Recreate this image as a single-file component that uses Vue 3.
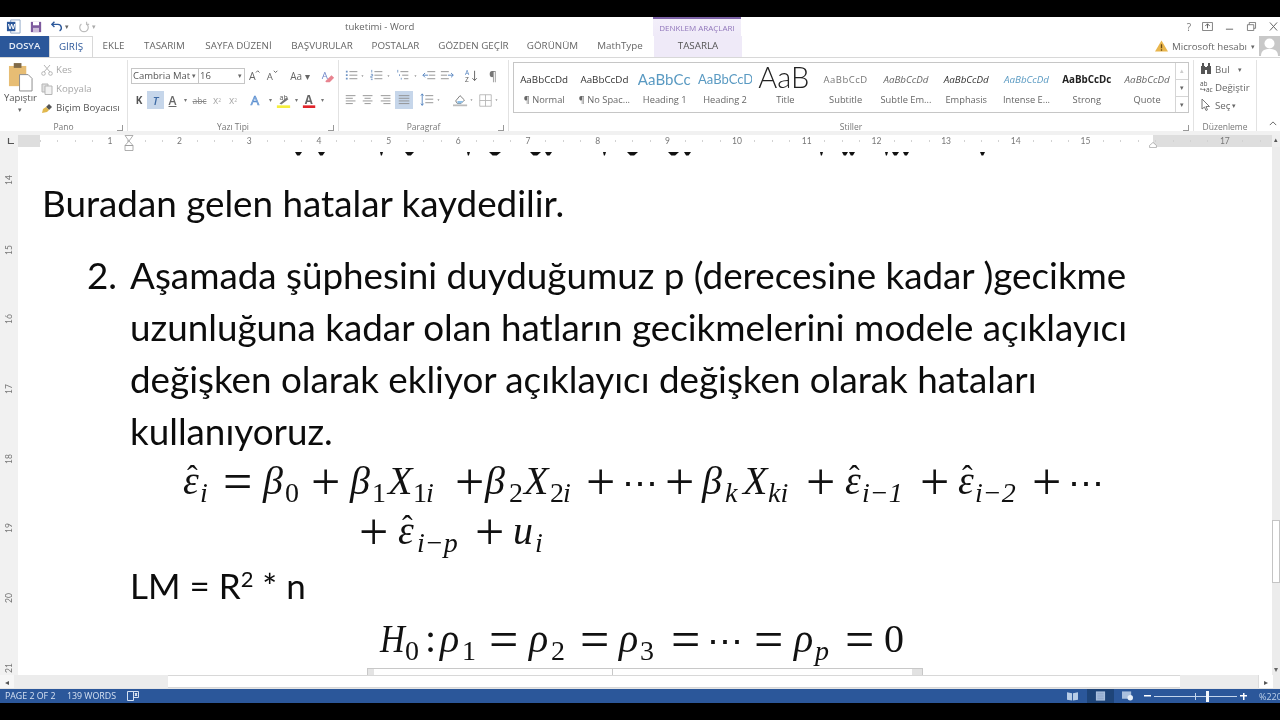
<script setup>
const tabs = [
  { t: 'DOSYA', w: 49, c: 'file' }, { t: 'GİRİŞ', w: 44, c: 'active' }, { t: 'EKLE', w: 41 }, { t: 'TASARIM', w: 61 },
  { t: 'SAYFA DÜZENİ', w: 87 }, { t: 'BAŞVURULAR', w: 80 }, { t: 'POSTALAR', w: 67 }, { t: 'GÖZDEN GEÇİR', w: 89 },
  { t: 'GÖRÜNÜM', w: 69 }, { t: 'MathType', w: 66 }, { t: 'TASARLA', w: 88, c: 'ctx' }
]
const lines3 = '<path d="M5 3h9M5 7h9M5 11h9" stroke="#8a8a8a"/><path d="M1 2h2v2H1zM1 6h2v2H1zM1 10h2v2H1z" fill="#6f94c4"/>'
const arrow = '<path d="M0 0h5L2.5 3z" fill="#666" transform="translate(1 6)"/>'
const al = y => `<path d="${y}" stroke="#8c8c8c" fill="none"/>`
const fontRow1 = [
  { w: 2 }, { w: 17, s: '<text x="1" y="13" font-size="12" fill="#666" font-family="Open Sans">A</text><path d="M9 4l2-2 2 2" stroke="#555" fill="none"/>' },
  { w: 17, s: '<text x="2" y="13" font-size="11" fill="#666" font-family="Open Sans">A</text><path d="M10 2l2 2 2-2" stroke="#555" fill="none"/>' },
  { w: 6 }, { w: 26, t: 'Aa ▾', c: 'aa' }, { w: 6 },
  { w: 16, s: '<text x="2" y="11" font-size="11" fill="#6f86c8" font-family="Open Sans">A</text><path d="M6 14l7-7 3 3-5 5H7z" fill="#e8838f"/>' }
]
const fontRow2 = [
  { w: 3 }, { w: 16, t: 'K', c: 'bk' }, { w: 17, t: 'T', c: 'it on' }, { w: 17, t: 'A', c: 'un' }, { w: 9, t: '▾', c: 'dd' },
  { w: 19, t: 'abc', c: 'st' }, { w: 16, t: 'x', sub: '2', c: 'sc' }, { w: 16, t: 'x', sup: '2', c: 'sc' }, { w: 6 },
  { w: 19, s: '<text x="2" y="14" font-size="15" fill="#fff" stroke="#5b8fd0" stroke-width=".8" font-family="Open Sans">A</text>' }, { w: 8, t: '▾', c: 'dd' },
  { w: 18, s: '<text x="4" y="8" font-size="8" fill="#555" font-family="Open Sans">ab</text><path d="M4 12l8-7 2 2-8 6z" fill="#777"/><rect x="1" y="14" width="15" height="3" fill="#f5ee3d"/>' }, { w: 8, t: '▾', c: 'dd' },
  { w: 18, s: '<text x="3" y="12" font-size="13" font-weight="700" fill="#666" font-family="Open Sans">A</text><rect x="1" y="14" width="14" height="3" fill="#e0242a"/>' }, { w: 8, t: '▾', c: 'dd' }
]
const paraRow1 = [
  { w: 20, s: lines3 }, { w: 5, s: arrow }, { w: 20, s: '<path d="M5 3h9M5 7h9M5 11h9" stroke="#8a8a8a"/><path d="M2 1v3M1 6h2v2H1v2h2M1 12h2" stroke="#6f94c4" fill="none"/>' }, { w: 6, s: arrow },
  { w: 20, s: '<path d="M5 3h9M7 7h7M9 11h5" stroke="#8a8a8a"/><path d="M2 1v3M4 6v2M6 10v2" stroke="#6f94c4"/>' }, { w: 8, s: arrow },
  { w: 17, s: '<path d="M6 3h9M8 7h7M6 11h9" stroke="#8a8a8a"/><path d="M7 7H1M3.5 4.5L1 7l2.500 2.500" stroke="#4f7fbd" fill="none"/>' },
  { w: 18, s: '<path d="M1 3h9M1 7h7M1 11h9" stroke="#8a8a8a"/><path d="M9 7h6M12.500 4.500L15 7l-2.500 2.500" stroke="#4f7fbd" fill="none"/>' },
  { w: 6 }, { w: 18, s: '<text x="1" y="7" font-size="7.500" fill="#4f7fbd" font-family="Open Sans">A</text><text x="1" y="15" font-size="7.500" fill="#555" font-family="Open Sans">Z</text><path d="M12 2v11M9.500 10.500L12 13l2.500-2.500" stroke="#555" fill="none"/>' },
  { w: 5 }, { w: 16, t: '¶', c: 'pil' }
]
const paraRow2 = [
  { w: 18, s: al('M2 3h11M2 6h8M2 9h11M2 12h8') }, { w: 17, s: al('M2 3h11M4 6h7M2 9h11M4 12h7') }, { w: 18, s: al('M2 3h11M5 6h8M2 9h11M5 12h8') },
  { w: 18, c: 'on', s: al('M2 3h12M2 6h12M2 9h12M2 12h12') }, { w: 5 },
  { w: 18, s: '<path d="M6 3h9M6 7h9M6 11h9" stroke="#8a8a8a"/><path d="M2.500 1v13M1 3l1.500-2L4 3M1 12l1.500 2L4 12" stroke="#4f7fbd" fill="none"/>' }, { w: 8, s: arrow }, { w: 8 },
  { w: 17, s: '<path d="M3 9l5-6 5 5-4 4H5z" fill="#fff" stroke="#6d6d6d"/><path d="M5 9h7l-3 3H5z" fill="#8fc0e8"/><path d="M0 14h16" stroke="#bbb" stroke-width="2"/>' }, { w: 8, s: arrow },
  { w: 17, s: '<path d="M2 2h13v13H2zM8.500 2v13M2 8.500h13" stroke="#b5b5b5" fill="none"/>' }, { w: 8, s: arrow }
]
const styles = [
  { p: 'AaBbCcDd', l: '¶ Normal', c: 'sN' }, { p: 'AaBbCcDd', l: '¶ No Spac...', c: 'sN' }, { p: 'AaBbCc', l: 'Heading 1', c: 'sH1' },
  { p: 'AaBbCcD', l: 'Heading 2', c: 'sH2' }, { p: 'AaB', l: 'Title', c: 'sT' }, { p: 'AaBbCcD', l: 'Subtitle', c: 'sS' },
  { p: 'AaBbCcDd', l: 'Subtle Em...', c: 'sE' }, { p: 'AaBbCcDd', l: 'Emphasis', c: 'sEm' }, { p: 'AaBbCcDd', l: 'Intense E...', c: 'sI' },
  { p: 'AaBbCcDc', l: 'Strong', c: 'sSt' }, { p: 'AaBbCcDd', l: 'Quote', c: 'sE' }
]
const hnums = [1, 2, 3, 4, 5, 6, 7, 8, 9, 10, 11, 12, 13, 14, 15, '', 17]
const vnums = [14, 15, 16, 17, 18, 19, 20, 21]
const marks = [[295, 7], [318, 7], [380, 3], [405, 9], [467, 3], [489, 12], [530, 11], [545, 7], [603, 3], [627, 11], [668, 11], [684, 7], [820, 3], [842, 6], [849, 6], [885, 3], [892, 7], [903, 6], [980, 5]]
const markPts = m => `${m[0] - 18},0 ${m[0] - 18 + m[1]},0 ${m[0] - 18 + m[1] * 0.65},3.5 ${m[0] - 18 + m[1] * 0.3},3.5`

const toks = list => list.map((a, i) => ({ t: a[1], c: a[2] || 'mi', w: (list[i + 1] ? list[i + 1][0] : a[0] + 40) - a[0] }))
const eq1 = toks([
  [183, 'ε', 'mi hat'], [200, 'i', 'sb'], [223, '=', 'op'], [263, 'β'], [285, '0', 'sn'], [311, '+', 'op'], [350, 'β'], [372, '1', 'sn'], [388, 'X'], [413, '1', 'sn'], [426, 'i', 'sb'],
  [455, '+', 'op'], [485, 'β'], [509, '2', 'sn'], [524, 'X'], [550, '2', 'sn'], [563, 'i', 'sb'], [586, '+', 'op'], [622, '⋯', 'dots'], [665, '+', 'op'], [702, 'β'], [725, 'k', 'sb'],
  [743, 'X'], [768, 'ki', 'sb'], [806, '+', 'op'], [845, 'ε', 'mi hat'], [862, 'i−1', 'sb'], [920, '+', 'op'], [958, 'ε', 'mi hat'], [975, 'i−2', 'sb'], [1032, '+', 'op'], [1068, '⋯', 'dots']
])
const eq2 = toks([[359, '+', 'op'], [398, 'ε', 'mi hat'], [417, 'i−p', 'sb'], [475, '+', 'op'], [513, 'u'], [535, 'i', 'sb']])
const eq3 = toks([
  [380, 'H', 'mi nar'], [405, '0', 'sn'], [425, ':', 'rm'], [440, 'ρ'], [462, '1', 'sn'], [489, '=', 'op'], [529, 'ρ'], [551, '2', 'sn'], [580, '=', 'op'], [619, 'ρ'], [640, '3', 'sn'],
  [671, '=', 'op'], [707, '⋯', 'dots'], [754, '=', 'op'], [794, 'ρ'], [815, 'p', 'sb'], [845, '=', 'op'], [884, '0', 'rm']
])
const equations = [{ k: 'e1', c: 'eq1', x: 183, toks: eq1 }, { k: 'e2', c: 'eq2', x: 359, toks: eq2 }]
</script>

<template>
  <div class="screen">
    <div class="blackbar top"></div>
    <div class="window">
      <div class="title">
        <div class="qat">
          <svg class="ic16" viewBox="0 0 16 16"><path d="M5 1h10v14H5z" fill="#fff" stroke="#8fa6c8"/><path d="M1 3h9v10H1z" fill="#2b579a"/><text x="2" y="11" font-size="8" font-weight="700" fill="#fff" font-family="Open Sans">W</text></svg>
          <svg class="ic14 gapL" viewBox="0 0 14 14"><path d="M1 1h12v12H1z" fill="#7d5a9e"/><path d="M3.500 1h7v4h-7z" fill="#fff"/><path d="M3.500 8h7v5h-7z" fill="#cbbcd9"/></svg>
          <svg class="ic14 gapM" viewBox="0 0 14 14"><path d="M4 1L1 4l3 3" fill="none" stroke="#2b579a" stroke-width="1.600"/><path d="M1 4h7a4 4 0 0 1 2 7.500" fill="none" stroke="#2b579a" stroke-width="1.600"/></svg>
          <span class="tiny">▾</span>
          <svg class="ic14 gapM" viewBox="0 0 14 14"><path d="M4 3.500a5 5 0 1 0 6 0M10 1v3h3" fill="none" stroke="#bdbdbd" stroke-width="1.400"/></svg>
          <span class="tiny lt">▾</span>
        </div>
        <div class="docname">tuketimi - Word</div>
        <div class="ctxhead">DENKLEM ARAÇLARI</div>
        <div class="winbtns">
          <span class="q">?</span>
          <svg class="wb" viewBox="0 0 12 10"><path d="M.5.5h11v9H.5z" fill="none" stroke="#777"/><path d="M6 2v5M3.500 4.500L6 2l2.500 2.500" fill="none" stroke="#555"/></svg>
          <svg class="wb" viewBox="0 0 12 10"><path d="M2 8h8" stroke="#777" stroke-width="1.200"/></svg>
          <svg class="wb" viewBox="0 0 12 10"><path d="M1.500 3h7v6.500h-7zM3.500 3V.5h7v6.500H8.500" fill="none" stroke="#777"/></svg>
          <svg class="wb" viewBox="0 0 12 10"><path d="M2 .5l8 9M10 .5l-8 9" stroke="#666" stroke-width="1.100"/></svg>
        </div>
      </div>

      <div class="tabs">
        <div v-for="tab in tabs" :key="tab.t" class="tab" :class="tab.c" :style="{ width: tab.w + 'px' }">{{ tab.t }}</div>
        <div class="account">
          <svg class="warn" viewBox="0 0 14 12"><path d="M7 0l7 12H0z" fill="#e9b64d"/><path d="M6.300 4h1.400v4.500H6.300zM6.300 9.500h1.400V11H6.300z" fill="#6b4b12"/></svg>
          <span class="acname">Microsoft hesabı</span><span class="tiny acarrow">▾</span>
          <svg class="avatar" viewBox="0 0 21 20"><rect width="21" height="20" fill="#c8c8c8"/><circle cx="10.500" cy="7.500" r="5" fill="#fff"/><path d="M2 20c0-6 4-7 8.500-7S19 14 19 20z" fill="#fff"/></svg>
        </div>
      </div>

      <div class="ribbon">
        <div class="group g-pano">
          <div class="gbody pano">
            <div class="paste">
              <svg class="clip" viewBox="0 0 26 30"><rect x="1" y="3" width="18" height="21" fill="#e7bd74"/><rect x="6" y="0" width="8" height="5" fill="#7f6a48"/><path d="M12 12h9l4 4v13H12z" fill="#fff" stroke="#8a8a8a"/></svg>
              <span class="pastelbl">Yapıştır</span>
              <span class="tiny">▾</span>
            </div>
            <div class="clipcol">
              <div class="cliprow dis"><svg class="ic12" viewBox="0 0 12 12"><path d="M3 1l6 7M9 1L3 8" stroke="#b5b5b5" fill="none"/><circle cx="2.500" cy="9.500" r="1.800" fill="none" stroke="#b5b5b5"/><circle cx="9.500" cy="9.500" r="1.800" fill="none" stroke="#b5b5b5"/></svg>Kes</div>
              <div class="cliprow dis"><svg class="ic12" viewBox="0 0 12 12"><path d="M1 1h6v8H1z" fill="#e0e0e0" stroke="#b5b5b5"/><path d="M4 3h7v8.500H4z" fill="#f2f2f2" stroke="#b5b5b5"/></svg>Kopyala</div>
              <div class="cliprow"><svg class="ic12" viewBox="0 0 12 12"><path d="M5 5l3-3 3 3-3 3z" fill="#555"/><path d="M5 5l3 3-2 2-5 1 1-4z" fill="#e1b84d"/></svg>Biçim Boyacısı</div>
            </div>
          </div>
          <div class="gfoot">Pano<span class="launcher"></span></div>
        </div>

        <div class="group g-font">
          <div class="gbody stack">
            <div class="row r1">
              <div class="combo name">Cambria Mat<span class="tiny">▾</span></div>
              <div class="combo size">16<span class="tiny">▾</span></div>
              <div v-for="(c, i) in fontRow1" :key="i" class="cell" :class="c.c" :style="{ width: c.w + 'px' }">
                <svg v-if="c.s" class="ic" viewBox="0 0 17 17" v-html="c.s"></svg><template v-else-if="c.t">{{ c.t }}</template>
              </div>
            </div>
            <div class="row r2">
              <div v-for="(c, i) in fontRow2" :key="i" class="cell" :class="c.c" :style="{ width: c.w + 'px' }">
                <svg v-if="c.s" class="ic" viewBox="0 0 17 17" v-html="c.s"></svg><template v-else-if="c.t">{{ c.t }}<sub v-if="c.sub">{{ c.sub }}</sub><sup v-if="c.sup">{{ c.sup }}</sup></template>
              </div>
            </div>
          </div>
          <div class="gfoot">Yazı Tipi<span class="launcher"></span></div>
        </div>

        <div class="group g-para">
          <div class="gbody stack">
            <div class="row r1 pr">
              <div v-for="(c, i) in paraRow1" :key="i" class="cell" :class="c.c" :style="{ width: c.w + 'px' }">
                <svg v-if="c.s" class="ic" :class="{ ar: c.w < 9 }" viewBox="0 0 17 17" v-html="c.s"></svg><template v-else-if="c.t">{{ c.t }}</template>
              </div>
            </div>
            <div class="row r2 pr">
              <div v-for="(c, i) in paraRow2" :key="i" class="cell" :class="c.c" :style="{ width: c.w + 'px' }">
                <svg v-if="c.s" class="ic" :class="{ ar: c.w < 9 }" viewBox="0 0 17 17" v-html="c.s"></svg>
              </div>
            </div>
          </div>
          <div class="gfoot">Paragraf<span class="launcher"></span></div>
        </div>

        <div class="group g-styles">
          <div class="gbody">
            <div class="gallery">
              <div v-for="s in styles" :key="s.l" class="style">
                <div class="prev" :class="s.c">{{ s.p }}</div>
                <div class="lab">{{ s.l }}</div>
              </div>
              <div class="gscroll">
                <span class="dim">▴</span><span>▾</span><span class="more">▾</span>
              </div>
            </div>
          </div>
          <div class="gfoot">Stiller<span class="launcher"></span></div>
        </div>

        <div class="group g-edit">
          <div class="gbody editcol">
            <div class="edrow"><svg class="ic12" viewBox="0 0 12 12"><path d="M1 3h4v8H1zM7 3h4v8H7zM2 0h2v3H2zM8 0h2v3H8zM5 4h2v3H5z" fill="#555"/></svg>Bul<span class="tiny ed">▾</span></div>
            <div class="edrow"><span class="abac">ab<br>↪ac</span>Değiştir</div>
            <div class="edrow"><svg class="ic12" viewBox="0 0 12 12"><path d="M2 0v10l2.500-2 1.500 3.500 1.500-.7L6 7.500h3.500z" fill="#fff" stroke="#777"/></svg>Seç<span class="tiny ed2">▾</span></div>
          </div>
          <div class="gfoot">Düzenleme</div>
        </div>
        <div class="collapse"><svg viewBox="0 0 10 6"><path d="M1 5l4-4 4 4" fill="none" stroke="#666" stroke-width="1.200"/></svg></div>
      </div>

      <div class="rulerrow">
        <div class="corner"><svg viewBox="0 0 7 7"><path d="M1.500 0v5.500H7" fill="none" stroke="#555" stroke-width="1.200"/></svg></div>
        <div class="hruler">
          <span v-for="(n, i) in hnums" :key="i" class="hn">{{ n }}</span>
          <svg class="marker left" viewBox="0 0 10 16"><path d="M1 .5h8L5 6zM5 6L1 10.500h8zM1 10.500h8v5H1z" fill="#fff" stroke="#9a9a9a" stroke-width=".8"/></svg>
          <svg class="marker right" viewBox="0 0 10 7"><path d="M5 .5L9 4v2.500H1V4z" fill="#fff" stroke="#9a9a9a" stroke-width=".8"/></svg>
        </div>
        <div class="scrollup"><span>▴</span></div>
      </div>

      <div class="main">
        <div class="vruler">
          <div class="vtrack"><span v-for="n in vnums" :key="n" class="vn"><i>{{ n }}</i></span></div>
        </div>
        <div class="doc">
          <svg class="clipped" viewBox="0 0 1254 6" width="1254" height="6">
            <polygon v-for="m in marks" :key="m[0]" :points="markPts(m)" fill="#111" />
          </svg>
          <p class="para first">Buradan gelen hatalar kaydedilir.</p>
          <div class="item">
            <span class="num">2.</span>
            <div class="itemtext">
              <div>Aşamada şüphesini duyduğumuz p (derecesine kadar )gecikme</div>
              <div>uzunluğuna kadar olan hatların gecikmelerini modele açıklayıcı</div>
              <div>değişken olarak ekliyor açıklayıcı değişken olarak hataları</div>
              <div>kullanıyoruz.</div>
            </div>
          </div>
          <div v-for="e in equations" :key="e.k" class="eq" :class="e.c" :style="{ paddingLeft: (e.x - 18) + 'px' }">
            <span v-for="(tk, i) in e.toks" :key="i" class="tk" :class="tk.c" :style="{ width: tk.w + 'px' }">{{ tk.t }}</span>
          </div>
          <div class="lm">LM = R<sup>2</sup> * n</div>
          <div class="eq eq3">
            <span v-for="(tk, i) in eq3" :key="i" class="tk" :class="tk.c" :style="{ width: tk.w + 'px' }">{{ tk.t }}</span>
          </div>
          <div class="frame"><span class="hand"></span><span class="hand2"></span></div>
        </div>
        <div class="vscroll">
          <div class="vthumb"></div>
          <span class="vdown">▾</span>
        </div>
      </div>

      <div class="hscroll">
        <span class="harrow">◂</span>
        <div class="hthumb"></div>
        <span class="harrow r">▸</span>
      </div>

      <div class="status">
        <span class="st1">PAGE 2 OF 2</span>
        <span class="st2">139 WORDS</span>
        <svg class="sticon" viewBox="0 0 12 10"><path d="M.5.500h6v9h-6zM6.500.5h5v6h-5z" fill="none" stroke="#d5e1f2"/><path d="M8 2l2 3M10 2L8 5" stroke="#fff"/></svg>
        <div class="stright">
          <svg class="vw" viewBox="0 0 12 10"><path d="M0 1l5.500 1v8L0 9zM12 1L6.500 2v8L12 9z" fill="#b9cde6"/></svg>
          <div class="vwon"><svg class="vw" viewBox="0 0 12 10"><path d="M1 0h10v10H1z" fill="#a9bfdd"/><path d="M2.500 2h7M2.500 4h7M2.500 6h7M2.500 8h7" stroke="#7d97bd" stroke-width=".7"/></svg></div>
          <svg class="vw" viewBox="0 0 12 10"><path d="M0 0h10v8H0z" fill="#a9bfdd"/><circle cx="9" cy="7" r="3" fill="#e6eef8"/></svg>
          <span class="zm minus"></span>
          <div class="slider"><span class="tick"></span><span class="thumb"></span></div>
          <span class="zm plus"></span>
          <span class="pct">%220</span>
        </div>
      </div>
    </div>
    <div class="blackbar bottom"></div>
  </div>
</template>

<style scoped>
.screen { width: 1280px; height: 720px; overflow: hidden; background: #000; display: flex; flex-direction: column; font-family: "Open Sans", "Liberation Sans", sans-serif; color: #555; filter: blur(.35px); }
.blackbar.top { height: 17px; background: #000; flex: none; }
.blackbar.bottom { flex: 1; background: #000; }
.window { display: flex; flex-direction: column; background: #fff; flex: none; height: 686px; }
.tiny { font-size: 7px; color: #666; line-height: 1; }
.tiny.lt { color: #aaa; }

.title { height: 19px; flex: none; display: flex; align-items: center; position: relative; }
.qat { display: flex; align-items: center; padding-left: 6px; width: 338px; flex: none; }
.ic16 { width: 15px; height: 15px; }
.ic14 { width: 12px; height: 12px; }
.gapL { margin-left: 9px; }
.gapM { margin-left: 9px; }
.qat .tiny { margin-left: 2px; }
.docname { font-size: 9.600px; color: #666; width: 309px; flex: none; padding-left: 1px; }
.ctxhead { position: absolute; left: 653px; top: 0; width: 88px; height: 19px; background: linear-gradient(#f3effa, #efeaf8); border-top: 2px solid #7e64a8; box-sizing: border-box; font-size: 8px; color: #9177bb; text-align: center; line-height: 17px; white-space: nowrap; overflow: hidden; }
.winbtns { margin-left: auto; display: flex; align-items: center; gap: 11px; padding-right: 1px; }
.q { font-size: 10px; color: #777; }
.wb { width: 11px; height: 9px; }

.tabs { height: 21px; flex: none; display: flex; align-items: stretch; position: relative; }
.tab { font-size: 9.800px; line-height: 20px; text-align: center; color: #666; white-space: nowrap; flex: none; }
.tab.file { background: #2b579a; color: #e8eef7; font-weight: 600; font-size: 9.500px; }
.tab.active { color: #2b579a; border: 1px solid #d8d8d8; border-bottom: none; box-sizing: border-box; background: #fff; position: relative; z-index: 1; }
.tab.ctx { margin-left: 1px; background: #efeaf8; color: #555; }
.account { margin-left: auto; display: flex; align-items: center; width: 125px; flex: none; height: 20px; position: relative; }
.warn { width: 13px; height: 12px; flex: none; }
.acname { font-size: 9.700px; margin-left: 4px; white-space: nowrap; color: #666; }
.acarrow { margin-left: 4px; }
.avatar { position: absolute; right: 0; top: 0; width: 21px; height: 20px; }

.ribbon { height: 74px; flex: none; display: flex; border-top: 1px solid #d8d8d8; box-sizing: border-box; position: relative; }
.group { display: flex; flex-direction: column; border-right: 1px solid #e2e2e2; box-sizing: border-box; margin-top: 2px; flex: none; }
.gbody { flex: 1; min-height: 0; }
.gfoot { height: 10px; font-size: 8.500px; color: #777; text-align: center; line-height: 12px; position: relative; flex: none; }
.launcher { position: absolute; right: 4px; bottom: 0; width: 5px; height: 5px; border-right: 1px solid #999; border-bottom: 1px solid #999; }
.g-pano { width: 128px; }
.g-font { width: 211px; }
.g-para { width: 170px; }
.g-styles { width: 685px; }
.g-edit { width: 63px; }
.pano { display: flex; }
.paste { width: 40px; display: flex; flex-direction: column; align-items: center; padding-top: 3px; flex: none; }
.clip { width: 25px; height: 29px; }
.pastelbl { font-size: 9.500px; color: #555; margin-top: -1px; line-height: 13px; margin-left: 1px; }
.paste .tiny { margin-top: 2px; }
.clipcol { padding-top: 0; padding-left: 1px; }
.cliprow { height: 19px; display: flex; align-items: center; font-size: 9.700px; white-space: nowrap; color: #555; }
.cliprow.dis { color: #a8a8a8; }
.ic12 { width: 12px; height: 12px; flex: none; margin-right: 3px; }
.stack { display: flex; flex-direction: column; }
.row { display: flex; align-items: center; flex: none; }
.row.r1 { height: 18px; margin-top: 7px; padding-left: 3px; }
.row.r2 { height: 18px; margin-top: 6px; }
.row.pr { padding-left: 3px; }
.combo { height: 16px; border: 1px solid #c6c6c6; box-sizing: border-box; font-size: 9.500px; line-height: 14px; padding-left: 1px; color: #555; position: relative; white-space: nowrap; flex: none; }
.combo .tiny { position: absolute; right: 2px; top: 3px; }
.combo.name { width: 68px; }
.combo.size { width: 47px; margin-left: -1px; }
.cell { height: 18px; display: flex; align-items: center; justify-content: center; flex: none; font-size: 11px; color: #666; position: relative; white-space: nowrap; }
.ic { width: 15px; height: 15px; flex: none; }
.ic.ar { width: 7px; height: 15px; }
.on { background: #c6d6ea; }
.aa { font-size: 10px; }
.bk { font-weight: 700; font-size: 10px; color: #555; }
.it { font-style: italic; font-weight: 600; color: #3d6aa4; }
.un { text-decoration: underline; font-weight: 600; font-size: 12px; }
.dd { font-size: 6px; color: #777; }
.st { font-size: 8.500px; text-decoration: line-through; color: #888; }
.sc { font-size: 10px; color: #aaa; }
.sc sub, .sc sup { font-size: 5px; }
.pil { font-size: 12px; color: #777; }

.gallery { margin-left: 4px; margin-top: 2px; width: 676px; height: 51px; border: 1px solid #c6c6c6; box-sizing: border-box; display: flex; position: relative; padding-right: 12px; }
.style { width: 60.300px; flex: none; display: flex; flex-direction: column; align-items: center; overflow: hidden; }
.prev { height: 30px; line-height: 33px; font-size: 9.800px; color: #333; white-space: nowrap; width: 54px; overflow: hidden; text-align: center; font-family: "Open Sans", sans-serif; }
.lab { font-size: 9.300px; color: #666; white-space: nowrap; line-height: 13px; margin-top: 0; }
.sH1 { font-size: 15px; color: #5a9ac2; text-align: left; font-family: "Lato", sans-serif; letter-spacing: .1px; }
.sH2 { font-size: 13px; color: #5a9ac2; text-align: left; font-family: "Lato", sans-serif; }
.sT { font-size: 29px; color: #222; line-height: 27px; font-weight: 300; font-family: "Lato", sans-serif; text-align: left; }
.sS { color: #777; letter-spacing: .5px; font-size: 9.500px; }
.sE { font-style: italic; color: #666; }
.sEm { font-style: italic; color: #333; }
.sI { font-style: italic; color: #5a9ac2; }
.sSt { font-weight: 700; color: #222; }
.gscroll { position: absolute; right: 0; top: 0; bottom: 0; width: 12px; border-left: 1px solid #d5d5d5; display: flex; flex-direction: column; font-size: 7px; color: #666; }
.gscroll span { flex: 1; text-align: center; line-height: 16px; border-bottom: 1px solid #d5d5d5; }
.gscroll span:last-child { border-bottom: 0; }
.gscroll .dim { color: #ccc; }
.editcol { padding-left: 6px; padding-top: 0; }
.edrow { height: 18px; display: flex; align-items: center; font-size: 9.700px; color: #666; white-space: nowrap; position: relative; }
.abac { width: 15px; font-size: 6.500px; line-height: 6.500px; color: #555; flex: none; }
.ed { margin-left: 8px; }
.ed2 { margin-left: 2px; }
.collapse { position: absolute; right: 0; bottom: 0; width: 12px; height: 12px; }
.collapse svg { width: 8px; height: 5px; display: block; margin: 2px 0 0 1px; }

.rulerrow { height: 16px; flex: none; background: #f1f1f1; display: flex; padding-top: 4px; box-sizing: border-box; align-items: stretch; }
.corner { width: 18px; flex: none; background: #f1f1f1; position: relative; }
.corner svg { width: 7px; height: 7px; display: block; margin: 3px 0 0 7px; }
.hruler { flex: none; width: 1254px; display: flex; position: relative; padding-left: 57px; box-sizing: border-box; background: linear-gradient(90deg, #dedede 0 22px, #fff 22px 1135px, #dedede 1135px); }
.hruler::before { content: ""; position: absolute; left: 22px; right: 0; top: 5px; height: 2px; background: repeating-linear-gradient(90deg, #d2d2d2 0 1px, transparent 1px 17.425px); }
.hn { width: 69.700px; flex: none; text-align: center; font-size: 8.500px; color: #777; line-height: 12px; font-family: "Lato", sans-serif; position: relative; background: linear-gradient(90deg, transparent 25px, #fff 25px 45px, transparent 45px); }
.hn:nth-child(17) { background: linear-gradient(90deg, transparent 25px, #dedede 25px 45px, transparent 45px); }
.hn:nth-child(16) { background: none; }
.marker { position: absolute; }
.marker.left { left: 106px; top: 0; width: 10px; height: 16px; z-index: 2; }
.marker.right { left: 1130px; top: 7px; width: 10px; height: 6px; }
.scrollup { flex: 1; background: #efefef; font-size: 7px; text-align: center; color: #555; line-height: 10px; }

.main { height: 528px; flex: none; display: flex; position: relative; overflow: hidden; }
.vruler { width: 18px; flex: none; background: #f1f1f1; overflow: hidden; }
.vtrack { margin-top: -2px; }
.vn { display: flex; height: 69.700px; align-items: center; justify-content: center; font-size: 8.500px; color: #777; font-family: "Lato", sans-serif; }
.vn i { font-style: normal; transform: rotate(-90deg); display: block; }
.doc { flex: 1; min-width: 0; position: relative; color: #0c0c0c; font-family: "Lato", "Liberation Sans", sans-serif; font-size: 36.800px; line-height: 52px; white-space: nowrap; overflow: hidden; }
.clipped { display: block; margin-top: 5px; }
.para { margin: 0; padding-left: 24px; padding-top: 19px; }
.item { display: flex; margin-top: 20px; padding-left: 69px; }
.num { width: 43px; flex: none; }
.eq { font-family: "Liberation Serif", serif; font-size: 40px; line-height: 50px; height: 50px; color: #111; white-space: nowrap; }
.eq1 { margin-top: -1px; }
.eq3 { margin-top: 3px; padding-left: 362px; }
.tk { display: inline-block; vertical-align: baseline; white-space: nowrap; position: relative; }
.mi { font-style: italic; }
.nar { transform: scaleX(.86); transform-origin: left; }
.hat::after { content: "ˆ"; position: absolute; left: 4px; top: -5px; font-size: 32px; font-style: normal; }
.sb { font-style: italic; font-size: 28px; vertical-align: -8px; }
.sn { font-size: 28px; vertical-align: -8px; }
.op { font-size: 52px; vertical-align: -5px; font-weight: 400; }
.rm { font-size: 40px; }
.dots { font-size: 36px; font-family: "DejaVu Serif", serif; vertical-align: -2px; }
.lm { padding-left: 112px; margin-top: 3px; height: 52px; font-size: 35px; }
.lm sup { font-size: 22px; line-height: 0; vertical-align: 12px; }
.frame { position: absolute; left: 349px; top: 521px; width: 556px; height: 7px; border: 1px solid #c8c8c8; border-bottom: 0; box-sizing: border-box; background: linear-gradient(90deg, transparent 244px, #c8c8c8 244px 245px, transparent 245px); }
.hand { position: absolute; left: 0; top: 0; width: 6px; height: 6px; background: #e4e4e4; }
.hand2 { position: absolute; right: 0; top: 0; width: 10px; height: 6px; background: #e2e2e2; }
.vscroll { width: 8px; flex: none; background: #ececec; position: relative; padding-top: 373px; box-sizing: border-box; }
.vthumb { height: 63px; background: #fff; border: 1px solid #c4c4c4; box-sizing: border-box; }
.vdown { position: absolute; bottom: 0; left: 0; width: 8px; text-align: center; font-size: 8px; color: #666; line-height: 12px; }

.hscroll { height: 14px; flex: none; display: flex; align-items: stretch; background: #ececec; border-bottom: 1px solid #e5e5e5; box-sizing: border-box; position: relative; font-size: 8px; color: #555; }
.harrow { width: 14px; text-align: center; line-height: 13px; flex: none; background: #f6f6f6; }
.harrow.r { margin-left: 78px; margin-right: 8px; background: #fff; border-left: 1px solid #ddd; width: 14px; }
.hthumb { width: 1012px; margin-left: 154px; background: #fff; border: 1px solid #d8d8d8; border-width: 1px 0; box-sizing: border-box; flex: none; }

.status { flex: 1; background: #2b579a; color: #d5e1f2; display: flex; align-items: center; font-size: 8.800px; position: relative; }
.st1 { margin-left: 5px; width: 62px; white-space: nowrap; }
.st2 { width: 60px; white-space: nowrap; }
.sticon { width: 12px; height: 10px; }
.stright { margin-left: auto; display: flex; align-items: center; height: 100%; }
.vw { width: 11px; height: 10px; flex: none; }
.vwon { width: 27px; height: 100%; background: #1e4478; display: flex; align-items: center; justify-content: center; margin: 0 8px 0 9px; }
.zm { display: block; width: 7px; height: 7px; flex: none; position: relative; }
.minus { margin-left: 11px; background: linear-gradient(#fff, #fff) center / 7px 1.500px no-repeat; }
.plus { background: linear-gradient(#fff, #fff) center / 8px 1.500px no-repeat, linear-gradient(#fff, #fff) center / 1.500px 8px no-repeat; margin-left: 3px; }
.slider { width: 83px; height: 1px; background: #c3d5ec; margin-left: 3px; position: relative; }
.tick { position: absolute; left: 41px; top: -3px; width: 1px; height: 7px; background: #c3d5ec; }
.thumb { position: absolute; left: 52px; top: -5px; width: 3px; height: 11px; background: #f2f6fb; }
.pct { font-size: 9px; width: 21px; margin-left: 12px; white-space: nowrap; color: #bcd0ea; }
</style>

<style>
html, body { margin: 0; background: #000; }
</style>
